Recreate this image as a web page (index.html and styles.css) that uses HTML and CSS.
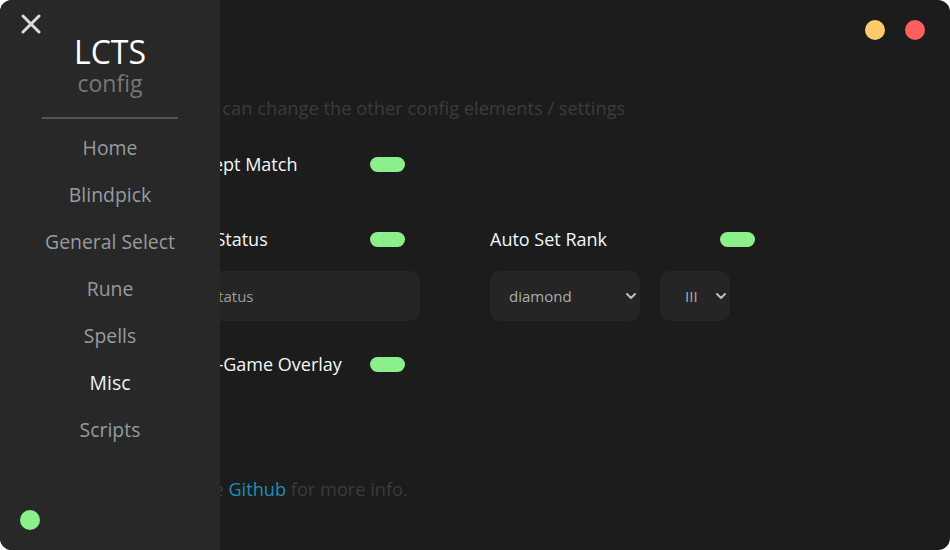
FILE: index.html
```html
<!DOCTYPE html>
<html lang="en">
<head>
<meta charset="utf-8">
<title>LCTS config</title>
<link rel="stylesheet" href="styles.css">
</head>
<body>
<div class="app">
  <div class="titlebar">
    <span class="dot dot-min"></span>
    <span class="dot dot-close"></span>
  </div>
  <main class="content">
    <p class="desc">Here you can change the other config elements / settings</p>
    <div class="grid">
      <div class="cell row1">
        <span class="label">Auto Accept Match</span>
        <span class="toggle"></span>
      </div>
      <div class="cell row1"></div>
      <div class="cell row2">
        <span class="label">Auto Set Status</span>
        <span class="toggle"></span>
      </div>
      <div class="cell row2">
        <span class="label">Auto Set Rank</span>
        <span class="toggle"></span>
      </div>
      <div class="field-row">
        <input class="text-input" type="text" placeholder="Custom status">
      </div>
      <div class="field-row selects">
        <div class="select-wrap wide">
          <select class="select sel-tier">
            <option>diamond</option>
          </select>
          <svg class="chev" width="10" height="6" viewBox="0 0 10 6"><path d="M1 1 L5 5 L9 1" fill="none" stroke="#bdbdbd" stroke-width="2" stroke-linecap="round" stroke-linejoin="round"/></svg>
        </div>
        <div class="select-wrap narrow">
          <select class="select sel-div">
            <option>III</option>
          </select>
          <svg class="chev" width="10" height="6" viewBox="0 0 10 6"><path d="M1 1 L5 5 L9 1" fill="none" stroke="#bdbdbd" stroke-width="2" stroke-linecap="round" stroke-linejoin="round"/></svg>
        </div>
      </div>
      <div class="cell row3">
        <span class="label">Enable In-Game Overlay</span>
        <span class="toggle"></span>
      </div>
    </div>
    <p class="footer">Check the <a class="link" href="#">Github</a> for more info.</p>
  </main>
  <aside class="sidebar">
    <svg class="close" width="20" height="20" viewBox="0 0 20 20"><path d="M2 2 L18 18 M18 2 L2 18" stroke="#dcdcdc" stroke-width="3" stroke-linecap="round"/></svg>
    <div class="brand">
      <div class="brand-title">LCTS</div>
      <div class="brand-sub">config</div>
    </div>
    <div class="sep"></div>
    <nav class="nav">
      <a class="nav-item" href="#">Home</a>
      <a class="nav-item" href="#">Blindpick</a>
      <a class="nav-item" href="#">General Select</a>
      <a class="nav-item" href="#">Rune</a>
      <a class="nav-item" href="#">Spells</a>
      <a class="nav-item active" href="#">Misc</a>
      <a class="nav-item" href="#">Scripts</a>
    </nav>
    <span class="status-dot"></span>
  </aside>
</div>
</body>
</html>
```

FILE: styles.css
```css
* { box-sizing: border-box; }
html, body { margin: 0; padding: 0; background: #ffffff; }
body { font-family: "Open Sans", "Noto Sans", sans-serif; }

.app {
  position: relative;
  width: 950px;
  height: 550px;
  background: #1c1c1c;
  border-radius: 12px;
  overflow: hidden;
}

.titlebar {
  display: flex;
  justify-content: flex-end;
  align-items: center;
  gap: 20px;
  height: 60px;
  padding-right: 25px;
}
.dot { width: 20px; height: 20px; border-radius: 50%; display: block; }
.dot-min { background: #fecb6a; }
.dot-close { background: #fe5f60; }

.content { padding-left: 140px; }

.desc {
  margin: 35px 0 0;
  font-size: 18.3px;
  line-height: 26px;
  color: #3b3b3b;
}

.grid {
  display: grid;
  grid-template-columns: 265px 265px;
  column-gap: 85px;
  margin-top: 28px;
}
.cell {
  display: flex;
  justify-content: space-between;
  align-items: center;
  height: 30px;
}
.row2 { margin-top: 45px; }
.row3 { margin-top: 28px; }
.label { font-size: 18px; color: #f4f6f8; line-height: 30px; }
.toggle {
  width: 35px;
  height: 15px;
  border-radius: 8px;
  background: #8bf08b;
  display: block;
  flex-shrink: 0;
}

.field-row { margin-top: 17px; display: flex; gap: 20px; }
.text-input {
  flex-shrink: 0;
  width: 280px;
  height: 50px;
  border: none;
  outline: none;
  border-radius: 10px;
  background: #252525;
  padding: 0 20px 0 13px;
  font-family: inherit;
  font-size: 15px;
  color: #aaaaaa;
}
.text-input::placeholder { color: #9d9d9d; }

.select-wrap { position: relative; height: 50px; flex-shrink: 0; }
.select-wrap.wide { width: 150px; }
.select-wrap.narrow { width: 70px; }
.select {
  appearance: none;
  -webkit-appearance: none;
  width: 100%;
  height: 50px;
  border: none;
  outline: none;
  border-radius: 10px;
  background: #252525;
  font-family: inherit;
  font-size: 15px;
  color: #a9adb0;
}
.sel-tier { padding: 0 20px 0 19px; }
.sel-div { padding: 0 20px 0 25px; }
.chev { position: absolute; right: 4px; top: 22px; }

.footer {
  margin: 97px 0 0;
  font-size: 18.2px;
  line-height: 26px;
  color: #3b3b3b;
}
.link { color: #1c8fb8; text-decoration: none; }

.sidebar {
  position: absolute;
  left: 0;
  top: 0;
  width: 220px;
  height: 100%;
  background: #282828;
  display: flex;
  flex-direction: column;
  align-items: center;
}
.close { position: absolute; left: 21px; top: 14px; }
.brand { padding-top: 36px; text-align: center; }
.brand-title { font-size: 32px; line-height: 32px; color: #ffffff; }
.brand-sub { font-size: 23px; line-height: 23px; color: #777777; margin-top: 4px; }
.sep { width: 136px; height: 2px; background: #555555; margin-top: 22px; }
.nav { display: flex; flex-direction: column; align-items: center; margin-top: 5px; }
.nav-item {
  font-size: 19.4px;
  line-height: 47px;
  color: #959ba0;
  text-decoration: none;
}
.nav-item.active { color: #eef2f5; }
.status-dot {
  position: absolute;
  left: 20px;
  bottom: 20px;
  width: 20px;
  height: 20px;
  border-radius: 50%;
  background: #8bf08b;
}
```
